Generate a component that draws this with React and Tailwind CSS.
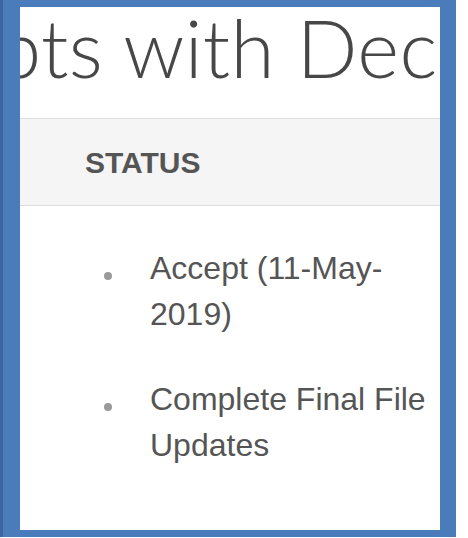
export default function App() {
  const items = ["Accept (11-May-2019)", "Complete Final File Updates"];

  return (
    <div className="w-[468px] h-[538px] bg-white">
      {/* picture frame */}
      <div className="w-[456px] h-[537px] bg-[#4a7cbc] border-l-[3px] border-[#3a67a3] pl-[17px] pt-[7px] pr-[16px] pb-[7px]">
        <div className="h-full bg-white overflow-hidden">
          <div className="h-[111px] overflow-hidden">
            <div className="ml-[-23px] whitespace-nowrap text-[80px] leading-none tracking-[0.3px] font-light text-[#474747] font-['Lato','Open_Sans',sans-serif]">
              pts with Dec
            </div>
          </div>

          <div className="h-[88px] border-y border-[#dedede] bg-[#f5f5f5] flex items-center pl-[65px]">
            <span className="text-[30px] font-bold text-[#555555] font-['Liberation_Sans',Arial,sans-serif]">
              STATUS
            </span>
          </div>

          <ul className="pt-[39px] flex flex-col gap-[39px] font-['Liberation_Sans',Arial,sans-serif] text-[32px] leading-[46px] text-[#555555]">
            {items.map((item) => (
              <li key={item} className="flex pl-[84px]">
                <span className="shrink-0 w-[8px] h-[8px] mt-[27px] rounded-full bg-[#9a9a9a]" />
                <span className="ml-[38px]">{item}</span>
              </li>
            ))}
          </ul>
        </div>
      </div>
    </div>
  );
}
